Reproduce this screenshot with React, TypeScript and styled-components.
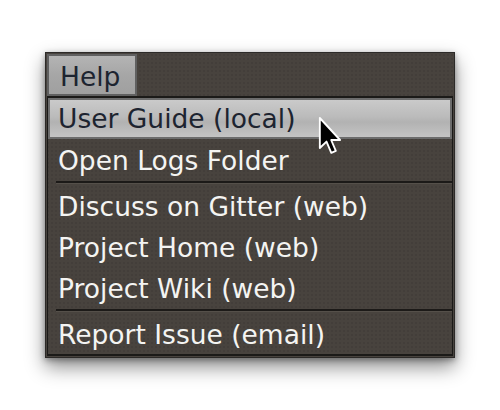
import React from "react";
import styled, { createGlobalStyle } from "styled-components";

const Global = createGlobalStyle`
  html, body { margin: 0; padding: 0; background: #ffffff; }
  body { font-family: "DejaVu Sans", "Liberation Sans", sans-serif; }
`;

const Page = styled.div`
  width: 500px;
  height: 410px;
  padding: 52px 0 0 45px;
  box-sizing: border-box;
`;

const Window = styled.div`
  position: relative;
  width: 410px;
  box-sizing: border-box;
  display: flex;
  flex-direction: column;
  padding: 1px;
  border: 1px solid #2c2a28;
  background-color: #48433e;
  background-image: radial-gradient(rgba(0, 0, 0, 0.07) 0.8px, transparent 1px);
  background-size: 4px 4px;
  box-shadow: 0 9px 18px rgba(0, 0, 0, 0.45), 0 2px 6px rgba(0, 0, 0, 0.35);
`;

const MenuBar = styled.div`
  display: flex;
  height: 42px;
`;

const MenuTitle = styled.div`
  width: 90px;
  box-sizing: border-box;
  border: 2px solid #606060;
  background: linear-gradient(#b4b4b4, #a6a6a6 50%, #a0a0a0);
  color: #1d2430;
  font-size: 26.5px;
  line-height: 35px;
  padding: 3px 0 0 11px;
`;

const Dropdown = styled.div`
  display: flex;
  flex-direction: column;
  border: 1px solid #1b1a18;
  border-top-width: 2px;
  border-bottom-width: 2px;
`;

const Item = styled.div<{ $active?: boolean }>`
  height: 41px;
  box-sizing: border-box;
  padding: 3px 0 0 ${(p) => (p.$active ? 8 : 10)}px;
  font-size: 26.5px;
  line-height: 38px;
  white-space: nowrap;
  color: ${(p) => (p.$active ? "#1d2430" : "#f4f4f2")};
  ${(p) =>
    p.$active
      ? `
    border: 2px solid #6c6c6c;
    padding-top: 1px;
    line-height: 36px;
    background: linear-gradient(#cacaca, #bbbbbb 45%, #b2b2b2 60%, #c4c4c4);
  `
      : ""}
`;

const Separator = styled.div`
  height: 5px;
  box-sizing: border-box;
  margin-left: 8px;
  display: flex;
  align-items: center;
  &::before {
    content: "";
    flex: 1;
    height: 2px;
    background: #1c1a18;
    border-bottom: 1px solid #55504a;
  }
`;

const Cursor = styled.svg`
  position: absolute;
  left: 271px;
  top: 63px;
  width: 27px;
  height: 40px;
`;

export default function App() {
  return (
    <Page>
      <Global />
      <Window>
        <MenuBar>
          <MenuTitle>Help</MenuTitle>
        </MenuBar>
        <Dropdown>
          <Item $active>User Guide (local)</Item>
          <Item>Open Logs Folder</Item>
          <Separator />
          <Item>Discuss on Gitter (web)</Item>
          <Item>Project Home (web)</Item>
          <Item>Project Wiki (web)</Item>
          <Separator />
          <Item>Report Issue (email)</Item>
        </Dropdown>
        <Cursor viewBox="0 0 20 30">
          <path
            d="M2 1.5 L2 24 L7 19.2 L10.6 27.6 L14 26.1 L10.5 18 L17.2 18 Z"
            fill="#000"
            stroke="#fff"
            strokeWidth="1.4"
            strokeLinejoin="round"
          />
        </Cursor>
      </Window>
    </Page>
  );
}
